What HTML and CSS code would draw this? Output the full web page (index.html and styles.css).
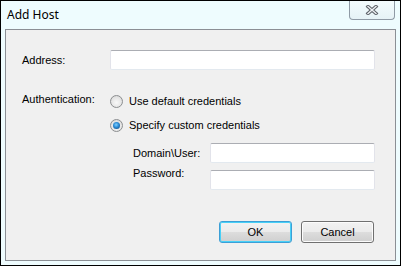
FILE: index.html
```html
<!DOCTYPE html>
<html lang="en">
<head>
    <meta charset="UTF-8">
    <title>Add Host</title>
    <link rel="stylesheet" href="styles.css">
</head>
<body>

<div class="window">
    <div class="titlebar">
        <span class="title">Add Host</span>
        <div class="close-btn">
            <svg width="14" height="10" viewBox="0 0 14 10">
                <path d="M3 1.5 L11 8.5 M11 1.5 L3 8.5" stroke="#5a5f66" stroke-width="3.4" stroke-linecap="square"/>
                <path d="M3 1.5 L11 8.5 M11 1.5 L3 8.5" stroke="#eef1f4" stroke-width="1.4" stroke-linecap="square"/>
            </svg>
        </div>
    </div>

    <div class="client">
        <div class="row">
            <label class="label">Address:</label>
            <div class="textbox wide"></div>
        </div>

        <div class="auth">
            <label class="label auth-label">Authentication:</label>
            <div class="options">
                <div class="option">
                    <span class="radio"></span>
                    <span>Use default credentials</span>
                </div>
                <div class="option">
                    <span class="radio checked"></span>
                    <span>Specify custom credentials</span>
                </div>
            </div>
        </div>

        <div class="creds">
            <div class="row">
                <label class="label small">Domain\User:</label>
                <div class="textbox narrow"></div>
            </div>
            <div class="row second">
                <label class="label small raised">Password:</label>
                <div class="textbox narrow"></div>
            </div>
        </div>

        <div class="buttons">
            <button class="btn default">OK</button>
            <button class="btn">Cancel</button>
        </div>
    </div>
</div>

</body>
</html>
```

FILE: styles.css
```css
body {
    margin: 0;
    padding: 0;
    font-family: "Liberation Sans", Arial, sans-serif;
    font-size: 11px;
    color: #000;
}
.window {
    width: 401px;
    height: 266px;
    box-sizing: border-box;
    border: 1px solid #000;
    background-color: #eefcfe;
    display: flex;
    flex-direction: column;
}
.titlebar {
    height: 28px;
    display: flex;
    justify-content: space-between;
    align-items: flex-start;
}
.title {
    font-family: "Noto Sans", sans-serif;
    font-size: 12px;
    margin: 5px 0 0 6px;
}
.close-btn {
    width: 44px;
    height: 18px;
    margin-right: 5px;
    border: 1px solid #8f9aa5;
    border-top: none;
    border-radius: 0 0 4px 4px;
    background: linear-gradient(#f3fbfd, #e6f2f6);
    display: flex;
    justify-content: center;
    align-items: center;
}
.client {
    flex: 1;
    margin: 0 4px 4px 4px;
    border: 1px solid #8b8f95;
    background-color: #f0f0f0;
    padding: 20px 0 0 16px;
    display: flex;
    flex-direction: column;
}
.row {
    display: flex;
    align-items: center;
    height: 20px;
}
.label {
    width: 88px;
    flex-shrink: 0;
}
.label.small {
    width: 77px;
}
.label.raised {
    align-self: flex-start;
    line-height: 13px;
    margin-top: -3px;
}
.textbox {
    height: 20px;
    box-sizing: border-box;
    background-color: #fff;
    border: 1px solid #e2e3ea;
    border-top-color: #abadb3;
    border-bottom-color: #e3e9ef;
    border-radius: 2px;
}
.textbox.wide {
    width: 265px;
}
.textbox.narrow {
    width: 165px;
}
.auth {
    display: flex;
    margin-top: 23px;
}
.auth-label {
    line-height: 16px;
    margin-top: -2px;
}
.options {
    display: flex;
    flex-direction: column;
    gap: 8px;
}
.option {
    display: flex;
    align-items: center;
    height: 16px;
    gap: 6px;
}
.radio {
    width: 11px;
    height: 11px;
    border-radius: 50%;
    border: 1px solid #8c8e90;
    background: radial-gradient(circle at 50% 60%, #f8f8f8 0%, #e6e6e6 55%, #cfcfcf 100%);
    position: relative;
}
.radio.checked::after {
    content: "";
    position: absolute;
    left: 2px;
    top: 2px;
    width: 7px;
    height: 7px;
    border-radius: 50%;
    background: radial-gradient(circle at 45% 40%, #7fd0ff 0%, #2a8ad4 45%, #0d3d6e 100%);
}
.creds {
    margin: 10px 0 0 111px;
}
.creds .second {
    margin-top: 7px;
}
.buttons {
    display: flex;
    justify-content: flex-end;
    gap: 9px;
    margin-top: 31px;
    padding-right: 21px;
}
.btn {
    width: 73px;
    height: 22px;
    box-sizing: border-box;
    font-family: "Liberation Sans", Arial, sans-serif;
    font-size: 11px;
    color: #000;
    border: 1px solid #707070;
    border-radius: 3px;
    background: linear-gradient(#f2f2f2 0%, #ebebeb 50%, #dddddd 50%, #cfcfcf 100%);
    box-shadow: inset 0 0 0 1px #fcfcfc;
    padding: 0;
}
.btn.default {
    border-color: #3c9fd6;
    box-shadow: inset 0 0 0 1px #48d0f7;
}
```
